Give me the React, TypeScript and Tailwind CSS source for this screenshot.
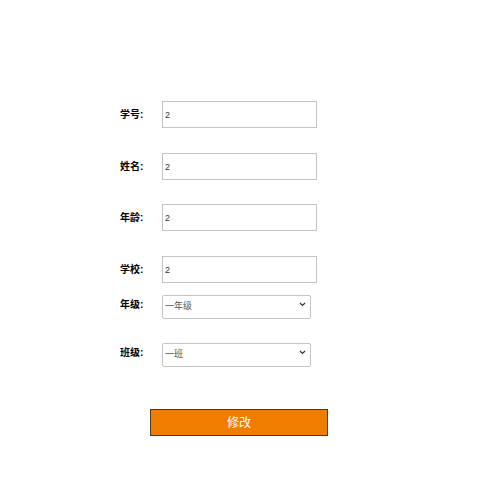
import React, { useState } from 'react';

const font = { fontFamily: '"Liberation Sans", "Noto Sans CJK SC", sans-serif' };

export default function App() {
  const [form, setForm] = useState({ id: '2', name: '2', age: '2', school: '2', grade: '一年级', klass: '一班' });

  const inputs: { key: 'id' | 'name' | 'age' | 'school'; label: string; mt: string }[] = [
    { key: 'id', label: '学号:', mt: 'mt-[101px]' },
    { key: 'name', label: '姓名:', mt: 'mt-[25px]' },
    { key: 'age', label: '年龄:', mt: 'mt-[24px]' },
    { key: 'school', label: '学校:', mt: 'mt-[25px]' },
  ];

  return (
    <div className="w-[500px] h-[500px] bg-white text-black" style={font}>
      <div className="pl-[120px] flex flex-col">
        {inputs.map((f) => (
          <div key={f.key} className={`${f.mt} flex items-center h-[27px]`}>
            <label className="w-[42px] text-[10px] font-bold">{f.label}</label>
            <input
              value={form[f.key]}
              onChange={(e) => setForm({ ...form, [f.key]: e.target.value })}
              className="w-[155px] h-[27px] border border-[#c4c4c4] px-[2px] text-[9px] text-[#333] outline-none"
            />
          </div>
        ))}

        <div className="mt-[9px] flex items-center h-[24px]">
          <label className="w-[42px] text-[10px] font-bold">年级:</label>
          <div className="relative w-[149px] h-[24px]">
            <select
              value={form.grade}
              onChange={(e) => setForm({ ...form, grade: e.target.value })}
              className="appearance-none w-full h-full border border-[#c4c4c4] rounded-[2px] pl-[2px] text-[9px] text-[#555] bg-white outline-none"
            >
              <option>一年级</option>
              <option>二年级</option>
              <option>三年级</option>
            </select>
            <svg className="absolute right-[5px] top-[10px] pointer-events-none" width="7" height="5" viewBox="0 0 7 5">
              <path d="M1 1l2.5 2.5L6 1" fill="none" stroke="#333" strokeWidth="1.2" />
            </svg>
          </div>
        </div>

        <div className="mt-[24px] flex items-center h-[24px]">
          <label className="w-[42px] text-[10px] font-bold">班级:</label>
          <div className="relative w-[149px] h-[24px]">
            <select
              value={form.klass}
              onChange={(e) => setForm({ ...form, klass: e.target.value })}
              className="appearance-none w-full h-full border border-[#c4c4c4] rounded-[2px] pl-[2px] text-[9px] text-[#555] bg-white outline-none"
            >
              <option>一班</option>
              <option>二班</option>
              <option>三班</option>
            </select>
            <svg className="absolute right-[5px] top-[10px] pointer-events-none" width="7" height="5" viewBox="0 0 7 5">
              <path d="M1 1l2.5 2.5L6 1" fill="none" stroke="#333" strokeWidth="1.2" />
            </svg>
          </div>
        </div>

        <button className="mt-[45px] ml-[30px] w-[178px] h-[27px] bg-[#f07c00] border border-[#4a3a2a] text-white text-[12px]">
          修改
        </button>
      </div>
    </div>
  );
}
